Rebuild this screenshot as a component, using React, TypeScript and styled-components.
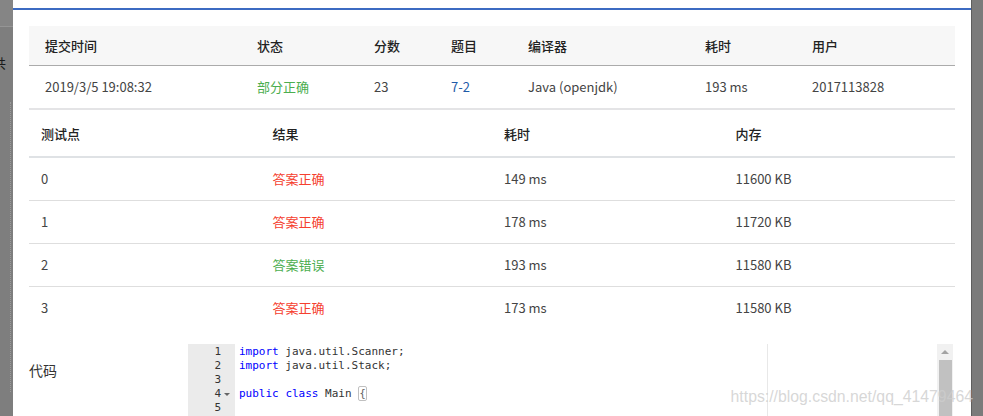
import styled, { createGlobalStyle } from 'styled-components'

const GlobalStyle = createGlobalStyle`
    html, body {
        margin: 0;
        padding: 0;
        overflow: hidden;
        background: #7f7f7f;
        font-family: "Segoe UI", "Noto Sans CJK SC", "Noto Sans", sans-serif;
    }
    * {
        box-sizing: border-box;
    }
`

const summaryCols = [
    { title: '提交时间', width: 212 },
    { title: '状态', width: 117 },
    { title: '分数', width: 77 },
    { title: '题目', width: 77 },
    { title: '编译器', width: 177 },
    { title: '耗时', width: 107 },
    { title: '用户', width: 159 }
]

const cases = [
    { id: '0', result: '答案正确', ok: true, time: '149 ms', mem: '11600 KB' },
    { id: '1', result: '答案正确', ok: true, time: '178 ms', mem: '11720 KB' },
    { id: '2', result: '答案错误', ok: false, time: '193 ms', mem: '11580 KB' },
    { id: '3', result: '答案正确', ok: true, time: '173 ms', mem: '11580 KB' }
]

const codeLines = [
    [{ k: true, t: 'import' }, { k: false, t: ' java.util.Scanner;' }],
    [{ k: true, t: 'import' }, { k: false, t: ' java.util.Stack;' }],
    [],
    [{ k: true, t: 'public' }, { k: false, t: ' ' }, { k: true, t: 'class' }, { k: false, t: ' Main ' }],
    []
]

const Page = styled.div`
    display: flex;
    width: 983px;
    height: 416px;
    position: relative;
    overflow: hidden;
`

const LeftShade = styled.div`
    width: 13px;
    flex-shrink: 0;
    background: #7e7e7e;
    display: flex;
    flex-direction: column;
    font-size: 13px;
    color: #222;
    overflow: hidden;
`

const ShadeTop = styled.div`
    height: 27px;
    background: #858585;
    border-bottom: 1px solid #959595;
`

const ShadeText = styled.div`
    margin-top: 26px;
    margin-left: -7px;
    white-space: nowrap;
    color: #1a1a1a;
    letter-spacing: 4px;
`

const ShadeDots = styled.div`
    margin-top: 30px;
    margin-left: 10px;
    height: 290px;
    border-left: 1px dotted #9a9a9a;
`

const RightShade = styled.div`
    width: 12px;
    flex-shrink: 0;
    background: #7b7b7b;
    border-left: 1px solid #5e5e5e;
`

const Modal = styled.div`
    flex: 1;
    min-width: 0;
    background: #fff;
    padding-top: 8px;
`

const TopBar = styled.div`
    height: 2px;
    background: #3c6bc2;
`

const Body = styled.div`
    padding: 16px 16px 0 16px;
`

const Table = styled.table`
    width: 100%;
    border-collapse: collapse;
    table-layout: fixed;
    font-size: 13px;
    color: #333;
`

const HeadCell = styled.th<{ w?: number }>`
    width: ${({ w }) => (w ? `${w}px` : 'auto')};
    text-align: left;
    font-weight: 500;
    padding: 0 0 0 16px;
    height: 39px;
    background: #f7f7f7;
    border-bottom: 1px solid #ababab;
    color: #222;
`

const Cell = styled.td<{ color?: string }>`
    padding: 0 0 0 16px;
    height: 44px;
    color: ${({ color }) => color || '#444'};
    border-bottom: 2px solid #e4e4e6;
`

const CaseHead = styled.th`
    text-align: left;
    font-weight: 500;
    padding: 0 0 0 12px;
    height: 47px;
    border-bottom: 2px solid #dfe2e5;
    color: #222;
`

const CaseCell = styled.td<{ color?: string; last?: boolean }>`
    padding: 0 0 0 12px;
    height: 43px;
    color: ${({ color }) => color || '#444'};
    border-bottom: ${({ last }) => (last ? 'none' : '1px solid #dedede')};
`

const CodeSection = styled.div`
    display: flex;
    margin-top: 15px;
`

const CodeLabel = styled.div`
    width: 159px;
    font-size: 14px;
    color: #333;
    padding-top: 16px;
`

const Editor = styled.div`
    flex: 1;
    display: flex;
    height: 80px;
    font-family: "DejaVu Sans Mono", "Liberation Mono", monospace;
    font-size: 11px;
    line-height: 14px;
    position: relative;
`

const Gutter = styled.div`
    width: 47px;
    background: #ebebeb;
    color: #333;
    text-align: right;
    padding-top: 1px;
`

const GutterLine = styled.div`
    padding-right: 14px;
    position: relative;
`

const Fold = styled.span`
    position: absolute;
    right: 5px;
    top: 6px;
    border-left: 3px solid transparent;
    border-right: 3px solid transparent;
    border-top: 3px solid #666;
`

const Lines = styled.div`
    flex: 1;
    padding: 1px 0 0 4px;
    color: #333;
    white-space: pre;
`

const Kw = styled.span`
    color: #0000ff;
`

const Bracket = styled.span`
    border: 1px solid #c0c0c0;
    border-radius: 2px;
    color: #666;
`

const PrintMargin = styled.div`
    position: absolute;
    left: 579px;
    top: 0;
    bottom: 0;
    border-left: 1px solid #e8e8e8;
`

const ScrollBar = styled.div`
    width: 16px;
    margin-right: 2px;
    background: #f1f1f1;
    display: flex;
    flex-direction: column;
    align-items: center;
`

const ScrollArrow = styled.div`
    margin-top: 6px;
    border-left: 4px solid transparent;
    border-right: 4px solid transparent;
    border-bottom: 4px solid #a3a3a3;
`

const ScrollThumb = styled.div`
    margin-top: 6px;
    width: 13px;
    flex: 1;
    background: #c1c1c1;
`

const Watermark = styled.div`
    position: absolute;
    right: 10px;
    top: 388px;
    font-family: "Liberation Sans", Arial, sans-serif;
    font-size: 15.8px;
    color: rgba(205, 205, 205, 0.8);
    white-space: nowrap;
    pointer-events: none;
`

const App = () => {
    return (
        <>
            <GlobalStyle />
            <Page>
                <LeftShade>
                    <ShadeTop />
                    <ShadeText>共 3</ShadeText>
                    <ShadeDots />
                </LeftShade>
                <Modal>
                    <TopBar />
                    <Body>
                        <Table>
                            <thead>
                                <tr>
                                    {summaryCols.map(c => (
                                        <HeadCell key={c.title} w={c.width}>{c.title}</HeadCell>
                                    ))}
                                </tr>
                            </thead>
                            <tbody>
                                <tr>
                                    <Cell>2019/3/5 19:08:32</Cell>
                                    <Cell color="#4cae4f">部分正确</Cell>
                                    <Cell>23</Cell>
                                    <Cell color="#1f5ba8">7-2</Cell>
                                    <Cell>Java (openjdk)</Cell>
                                    <Cell>193 ms</Cell>
                                    <Cell>2017113828</Cell>
                                </tr>
                            </tbody>
                        </Table>
                        <Table>
                            <thead>
                                <tr>
                                    <CaseHead>测试点</CaseHead>
                                    <CaseHead>结果</CaseHead>
                                    <CaseHead>耗时</CaseHead>
                                    <CaseHead>内存</CaseHead>
                                </tr>
                            </thead>
                            <tbody>
                                {cases.map((c, i) => {
                                    const last = i === cases.length - 1
                                    return (
                                        <tr key={c.id}>
                                            <CaseCell last={last}>{c.id}</CaseCell>
                                            <CaseCell last={last} color={c.ok ? '#f5402f' : '#4cae4f'}>{c.result}</CaseCell>
                                            <CaseCell last={last}>{c.time}</CaseCell>
                                            <CaseCell last={last}>{c.mem}</CaseCell>
                                        </tr>
                                    )
                                })}
                            </tbody>
                        </Table>
                        <CodeSection>
                            <CodeLabel>代码</CodeLabel>
                            <Editor>
                                <Gutter>
                                    {codeLines.map((_, i) => (
                                        <GutterLine key={i}>
                                            {i + 1}
                                            {i === 3 && <Fold />}
                                        </GutterLine>
                                    ))}
                                </Gutter>
                                <Lines>
                                    {codeLines.map((line, i) => (
                                        <div key={i}>
                                            {line.length === 0 ? ' ' : line.map((p, j) => (p.k ? <Kw key={j}>{p.t}</Kw> : <span key={j}>{p.t}</span>))}
                                            {i === 3 && <Bracket>{'{'}</Bracket>}
                                        </div>
                                    ))}
                                </Lines>
                                <PrintMargin />
                                <ScrollBar>
                                    <ScrollArrow />
                                    <ScrollThumb />
                                </ScrollBar>
                            </Editor>
                        </CodeSection>
                    </Body>
                </Modal>
                <RightShade />
                <Watermark>https://blog.csdn.net/qq_41479464</Watermark>
            </Page>
        </>
    )
}

export default App
